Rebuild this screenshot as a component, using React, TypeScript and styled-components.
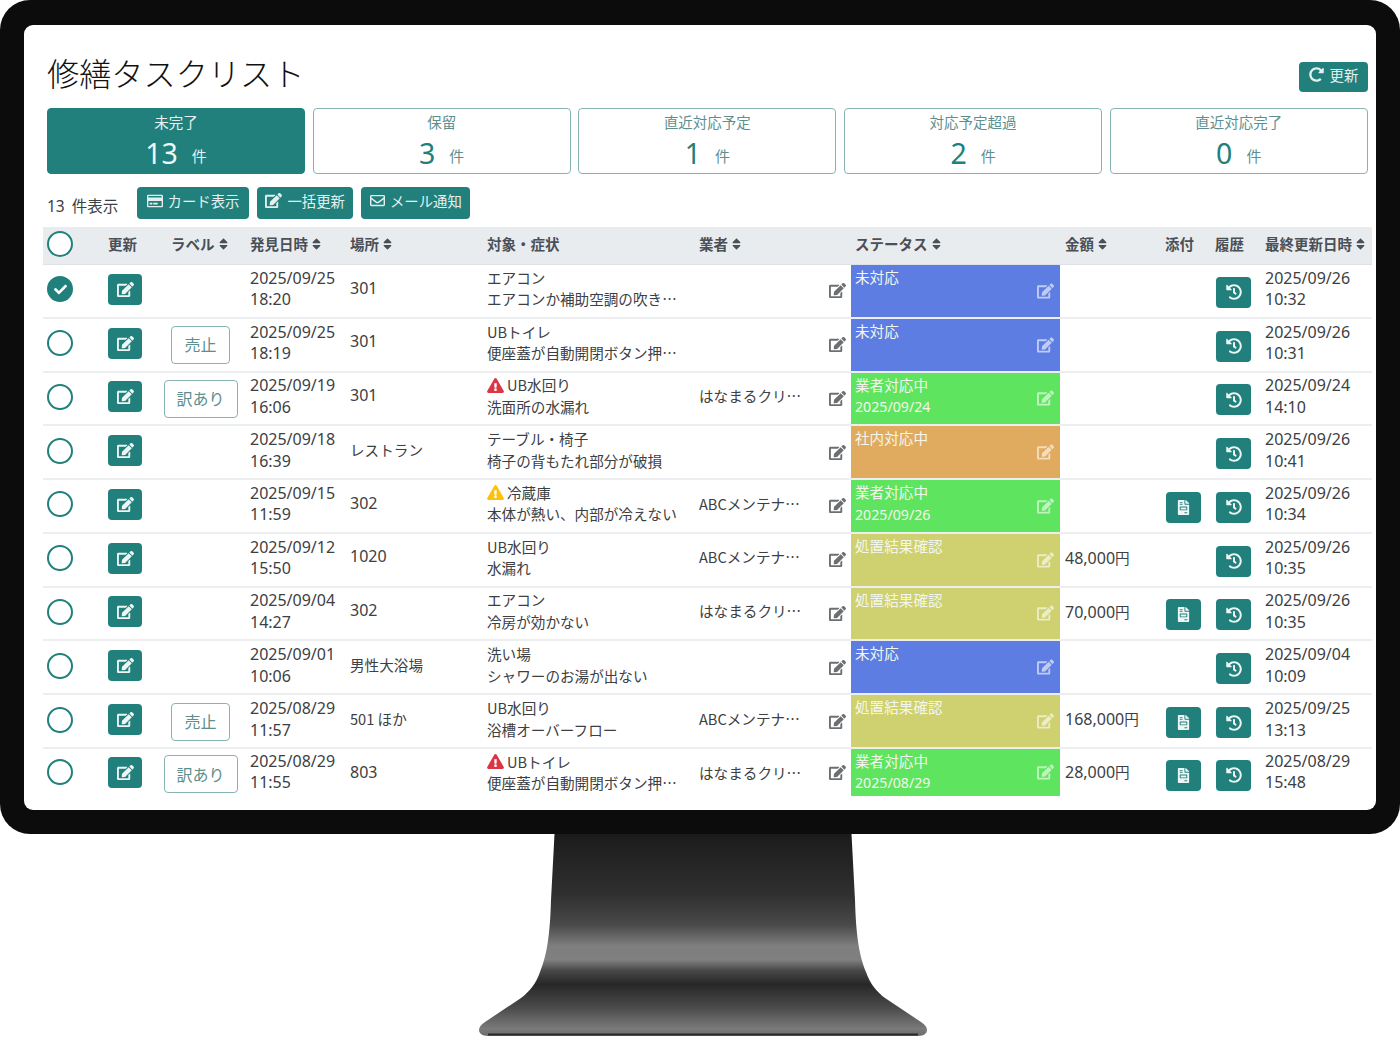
import React from 'react';
import styled, { createGlobalStyle } from 'styled-components';
import { FaEdit, FaSort, FaHistory, FaFileInvoice, FaRedoAlt, FaRegCreditCard, FaRegEnvelope, FaExclamationTriangle, FaCheck } from 'react-icons/fa';

const TEAL = '#21807c';
const CJK = '"Noto Sans CJK JP", "Noto Sans", sans-serif';
const LATIN = '"Noto Sans", "Noto Sans CJK JP", sans-serif';
const COLS = '61px 51px 91px 100px 137px 212px 128px 28px 210px 100px 50px 50px 111px';

const Global = createGlobalStyle`
  html, body { margin: 0; padding: 0; background: #fff; }
  body { font-family: ${CJK}; color: #3c4043; }
  * { box-sizing: border-box; }
`;

const Monitor = styled.div`
  width: 1400px;
  height: 1040px;
  display: flex;
  flex-direction: column;
`;
const Bezel = styled.div`
  width: 1400px;
  height: 834px;
  flex: none;
  padding: 25px 24px 24px;
  background: #0c0c0c;
  border-radius: 30px;
`;
const Screen = styled.div`
  height: 785px;
  padding: 0 4px 0 19px;
  background: #fff;
  border-radius: 9px;
  overflow: hidden;
`;
const TitleRow = styled.div`
  height: 83px;
  padding: 27px 4px 0;
  display: flex;
  justify-content: space-between;
  align-items: flex-start;
`;
const Title = styled.h1`
  margin: 0;
  font-size: 32.2px;
  line-height: 40px;
  font-weight: 300;
  color: #111;
`;
const Button = styled.button`
  display: inline-flex;
  align-items: center;
  justify-content: center;
  gap: 5px;
  height: 32px;
  padding: 0 6px 5px;
  border: 0;
  border-radius: 4px;
  background: ${TEAL};
  color: #e4f0ef;
  font-family: ${CJK};
  font-size: 14.4px;
  white-space: nowrap;
`;
const RefreshButton = styled(Button)`
  width: 69px;
  height: 30px;
  margin-top: 10px;
  gap: 6px;
`;
const Kpis = styled.div`
  display: grid;
  grid-template-columns: repeat(5, 258px);
  gap: 7.7px;
  padding: 0 4px;
`;
const Kpi = styled.div<{ $active?: boolean }>`
  height: 66px;
  border: 1px solid ${p => (p.$active ? TEAL : '#85b4b3')};
  border-radius: 4px;
  background: ${p => (p.$active ? TEAL : '#fff')};
  color: ${p => (p.$active ? '#e6f2f1' : '#5d8f8e')};
  text-align: center;
`;
const KpiLabel = styled.div`
  font-size: 14.5px;
  line-height: 20px;
  margin-top: 3px;
`;
const KpiValue = styled.div<{ $active?: boolean }>`
  line-height: 38px;
  margin-top: 2px;
  display: flex;
  justify-content: center;
  align-items: center;
  gap: 14px;
  font-family: ${LATIN};
  font-size: 28.5px;
  color: ${p => (p.$active ? '#eef7f6' : TEAL)};
`;
const Unit = styled.span<{ $active?: boolean }>`
  margin-top: 6px;
  font-family: ${CJK};
  font-size: 15px;
  line-height: 20px;
  color: ${p => (p.$active ? '#e6f2f1' : '#5d8f8e')};
`;
const Toolbar = styled.div`
  margin-top: 13px;
  height: 32px;
  padding: 0 4px;
  display: flex;
  align-items: center;
`;
const Count = styled.span`
  width: 90px;
  margin-top: 5px;
  font-size: 15.5px;
  font-family: ${LATIN};
  word-spacing: 3px;
  color: #3c4043;
  white-space: nowrap;
`;
const ToolButton = styled(Button)<{ $w: number }>`
  width: ${p => p.$w}px;
  margin-right: 8.2px;
`;
const Table = styled.div`
  margin-top: 8px;
`;
const HeadRow = styled.div`
  height: 38px;
  display: grid;
  grid-template-columns: ${COLS};
  background: #e9ecef;
  border-bottom: 1px solid #dee2e6;
  align-items: stretch;
`;
const Row = styled.div<{ $last?: boolean }>`
  height: ${p => (p.$last ? 47 : 53.78)}px;
  display: grid;
  grid-template-columns: ${COLS};
  border-bottom: ${p => (p.$last ? 0 : 2)}px solid #eceef0;
  align-items: stretch;
`;
const Th = styled.div<{ $indent?: boolean }>`
  padding: 0 0 4px ${p => (p.$indent ? 16 : 4)}px;
  display: flex;
  align-items: center;
  gap: 4px;
  font-size: 14.5px;
  font-weight: 700;
  color: #495057;
  white-space: nowrap;
`;
const SortIcon = styled(FaSort)`
  width: 9px;
  height: 14px;
  color: #495057;
`;
const Cell = styled.div<{ $center?: boolean; $last?: boolean; $high?: boolean }>`
  padding: 0 0 ${p => (p.$last ? 0 : p.$high ? 5 : 3)}px ${p => (p.$center ? 0 : 4)}px;
  display: flex;
  flex-direction: column;
  justify-content: center;
  align-items: ${p => (p.$center ? 'center' : 'flex-start')};
  font-size: 14.6px;
  line-height: 21.5px;
  white-space: nowrap;
  overflow: hidden;
  min-width: 0;
`;
const Num = styled.span`
  font-family: ${LATIN};
  font-size: 16px;
  color: #3c4043;
`;
const Circle = styled.span<{ $on?: boolean }>`
  width: 26px;
  height: 26px;
  border-radius: 50%;
  border: 2px solid ${TEAL};
  background: ${p => (p.$on ? TEAL : '#fff')};
  color: #fff;
  display: flex;
  align-items: center;
  justify-content: center;
`;
const IconButton = styled.span<{ $w: number; $down?: number; $right?: number }>`
  width: ${p => p.$w}px;
  height: 31px;
  margin-top: ${p => p.$down || 0}px;
  margin-left: ${p => p.$right || 0}px;
  border-radius: 4px;
  background: ${TEAL};
  color: #eef6f5;
  display: flex;
  align-items: center;
  justify-content: center;
`;
const Tag = styled.span<{ $w: number }>`
  width: ${p => p.$w}px;
  height: 38px;
  margin-top: 4px;
  border: 1px solid #85b4b3;
  border-radius: 4px;
  color: #5d8f8e;
  font-size: 16px;
  display: flex;
  align-items: center;
  justify-content: center;
`;
const SubjectLine = styled.span`
  display: flex;
  align-items: center;
  gap: 3px;
`;
const WarnIcon = styled(FaExclamationTriangle)<{ $color: string }>`
  width: 17px;
  height: 15px;
  color: ${p => p.$color};
`;
const PencilCell = styled.div`
  display: flex;
  align-items: center;
  justify-content: center;
  color: #6c6f72;
`;
const Status = styled.div<{ $bg: string }>`
  position: relative;
  margin: 0 1px 0 0;
  padding: 1px 30px 0 4px;
  background: ${p => p.$bg};
  color: #f2f7ee;
  font-size: 14.6px;
  line-height: 21.6px;
`;
const StatusIcon = styled.span`
  position: absolute;
  right: 6px;
  top: 50%;
  transform: translateY(-50%);
  display: flex;
  color: rgba(255, 255, 255, 0.6);
`;
const StatusDate = styled.div`
  font-family: ${LATIN};
  font-size: 14.2px;
  margin-top: 1px;
`;
const Stand = styled.svg`
  width: 1400px;
  height: 206px;
  flex: none;
  display: block;
`;

const BLUE = '#5e7de2';
const GREEN = '#5fe460';
const ORANGE = '#e0ab5e';
const OLIVE = '#cfd06f';

type RowData = {
  on?: boolean; tag?: string; d: string; t: string; place: string; placeNum?: boolean;
  warn?: string; s1: string; s2: string; vendor?: string; st: string; bg: string; sd?: string;
  price?: string; file?: boolean; ud: string; ut: string;
};
const RED = '#dc3545';
const YEL = '#ffc107';
const rows: RowData[] = [
  { on: true, d: '2025/09/25', t: '18:20', place: '301', placeNum: true, s1: 'エアコン', s2: 'エアコンか補助空調の吹き…', st: '未対応', bg: BLUE, ud: '2025/09/26', ut: '10:32' },
  { tag: '売止', d: '2025/09/25', t: '18:19', place: '301', placeNum: true, s1: 'UBトイレ', s2: '便座蓋が自動開閉ボタン押…', st: '未対応', bg: BLUE, ud: '2025/09/26', ut: '10:31' },
  { tag: '訳あり', d: '2025/09/19', t: '16:06', place: '301', placeNum: true, warn: RED, s1: 'UB水回り', s2: '洗面所の水漏れ', vendor: 'はなまるクリ…', st: '業者対応中', sd: '2025/09/24', bg: GREEN, ud: '2025/09/24', ut: '14:10' },
  { d: '2025/09/18', t: '16:39', place: 'レストラン', s1: 'テーブル・椅子', s2: '椅子の背もたれ部分が破損', st: '社内対応中', bg: ORANGE, ud: '2025/09/26', ut: '10:41' },
  { d: '2025/09/15', t: '11:59', place: '302', placeNum: true, warn: YEL, s1: '冷蔵庫', s2: '本体が熱い、内部が冷えない', vendor: 'ABCメンテナ…', st: '業者対応中', sd: '2025/09/26', bg: GREEN, file: true, ud: '2025/09/26', ut: '10:34' },
  { d: '2025/09/12', t: '15:50', place: '1020', placeNum: true, s1: 'UB水回り', s2: '水漏れ', vendor: 'ABCメンテナ…', st: '処置結果確認', bg: OLIVE, price: '48,000円', ud: '2025/09/26', ut: '10:35' },
  { d: '2025/09/04', t: '14:27', place: '302', placeNum: true, s1: 'エアコン', s2: '冷房が効かない', vendor: 'はなまるクリ…', st: '処置結果確認', bg: OLIVE, price: '70,000円', file: true, ud: '2025/09/26', ut: '10:35' },
  { d: '2025/09/01', t: '10:06', place: '男性大浴場', s1: '洗い場', s2: 'シャワーのお湯が出ない', st: '未対応', bg: BLUE, ud: '2025/09/04', ut: '10:09' },
  { tag: '売止', d: '2025/08/29', t: '11:57', place: '501 ほか', s1: 'UB水回り', s2: '浴槽オーバーフロー', vendor: 'ABCメンテナ…', st: '処置結果確認', bg: OLIVE, price: '168,000円', file: true, ud: '2025/09/25', ut: '13:13' },
  { tag: '訳あり', d: '2025/08/29', t: '11:55', place: '803', placeNum: true, warn: RED, s1: 'UBトイレ', s2: '便座蓋が自動開閉ボタン押…', vendor: 'はなまるクリ…', st: '業者対応中', sd: '2025/08/29', bg: GREEN, price: '28,000円', file: true, ud: '2025/08/29', ut: '15:48' },
];

const heads: [string, boolean][] = [
  ['', false], ['更新', false], ['ラベル', true], ['発見日時', true], ['場所', true], ['対象・症状', false],
  ['業者', true], ['', false], ['ステータス', true], ['金額', true], ['添付', false], ['履歴', false], ['最終更新日時', true],
];

const Price = ({ v }: { v: string }) => {
  const n = v.replace('円', '');
  return <span><Num>{n}</Num>円</span>;
};

export default function App() {
  return (
    <Monitor>
      <Global />
      <Bezel>
        <Screen>
          <TitleRow>
            <Title>修繕タスクリスト</Title>
            <RefreshButton><FaRedoAlt size={15} />更新</RefreshButton>
          </TitleRow>
          <Kpis>
            {([['未完了', '13'], ['保留', '3'], ['直近対応予定', '1'], ['対応予定超過', '2'], ['直近対応完了', '0']] as const).map(([l, v], i) => (
              <Kpi key={l} $active={i === 0}>
                <KpiLabel>{l}</KpiLabel>
                <KpiValue $active={i === 0}>{v}<Unit $active={i === 0}>件</Unit></KpiValue>
              </Kpi>
            ))}
          </Kpis>
          <Toolbar>
            <Count>13 件表示</Count>
            <ToolButton $w={112}><FaRegCreditCard size={16} />カード表示</ToolButton>
            <ToolButton $w={96}><FaEdit size={17} />一括更新</ToolButton>
            <ToolButton $w={109}><FaRegEnvelope size={15} />メール通知</ToolButton>
          </Toolbar>
          <Table>
            <HeadRow>
              {heads.map(([h, s], i) =>
                i === 0 ? (
                  <Cell key={i}><Circle /></Cell>
                ) : (
                  <Th key={i} $indent={i === 2}>{h}{s && <SortIcon />}</Th>
                )
              )}
            </HeadRow>
            {rows.map((r, i) => {
              const last = i === rows.length - 1;
              return (
                <Row key={i} $last={last}>
                  <Cell $last={last}><Circle $on={r.on}>{r.on && <FaCheck size={13} />}</Circle></Cell>
                  <Cell $last={last}><IconButton $w={34}><FaEdit size={17} /></IconButton></Cell>
                  <Cell $center $last={last}>{r.tag && <Tag $w={r.tag === '売止' ? 59 : 74}>{r.tag}</Tag>}</Cell>
                  <Cell $last={last}><Num>{r.d}</Num><Num>{r.t}</Num></Cell>
                  <Cell $high $last={last}>{r.placeNum ? <Num>{r.place}</Num> : r.place}</Cell>
                  <Cell $high $last={last}>
                    <SubjectLine>{r.warn && <WarnIcon $color={r.warn} />}{r.s1}</SubjectLine>
                    <span>{r.s2}</span>
                  </Cell>
                  <Cell $high $last={last}>{r.vendor}</Cell>
                  <PencilCell><FaEdit size={17} /></PencilCell>
                  <Status $bg={r.bg}>
                    {r.st}
                    {r.sd && <StatusDate>{r.sd}</StatusDate>}
                    <StatusIcon><FaEdit size={17} /></StatusIcon>
                  </Status>
                  <Cell $last={last}>{r.price && <Price v={r.price} />}</Cell>
                  <Cell $last={last}>{r.file && <IconButton $w={35} $down={6} $right={1}><FaFileInvoice size={15} /></IconButton>}</Cell>
                  <Cell $last={last}><IconButton $w={35} $down={6} $right={1}><FaHistory size={16} /></IconButton></Cell>
                  <Cell $last={last}><Num>{r.ud}</Num><Num>{r.ut}</Num></Cell>
                </Row>
              );
            })}
          </Table>
        </Screen>
      </Bezel>
      <Stand viewBox="0 834 1400 206">
        <defs>
          <linearGradient id="standFill" x1="0" y1="834" x2="0" y2="1037" gradientUnits="userSpaceOnUse">
            <stop offset="0" stopColor="#1b1b1b" />
            <stop offset="0.3" stopColor="#303030" />
            <stop offset="0.45" stopColor="#4a4a4a" />
            <stop offset="0.55" stopColor="#7e7e7e" />
            <stop offset="0.62" stopColor="#808080" />
            <stop offset="0.67" stopColor="#4a4a4a" />
            <stop offset="0.74" stopColor="#272727" />
            <stop offset="0.86" stopColor="#4d4d4d" />
            <stop offset="0.96" stopColor="#7a7a7a" />
            <stop offset="1" stopColor="#6a6a6a" />
          </linearGradient>
        </defs>
        <path
          d="M554.5 834 L851.5 834 L855 900 C856 935 859 955 866 972 C870 984 877 992 885 998 L921 1022 C925 1025 927 1027 927 1030 C927 1033 924 1036 918 1036 L488 1036 C482 1036 479 1033 479 1030 C479 1027 481 1025 485 1022 L521 998 C529 992 536 984 540 972 C547 955 550 935 551 900 Z"
          fill="url(#standFill)"
        />
        <path d="M488 1034.5 L918 1034.5" stroke="#2a2a2a" strokeWidth="2" />
      </Stand>
    </Monitor>
  );
}
